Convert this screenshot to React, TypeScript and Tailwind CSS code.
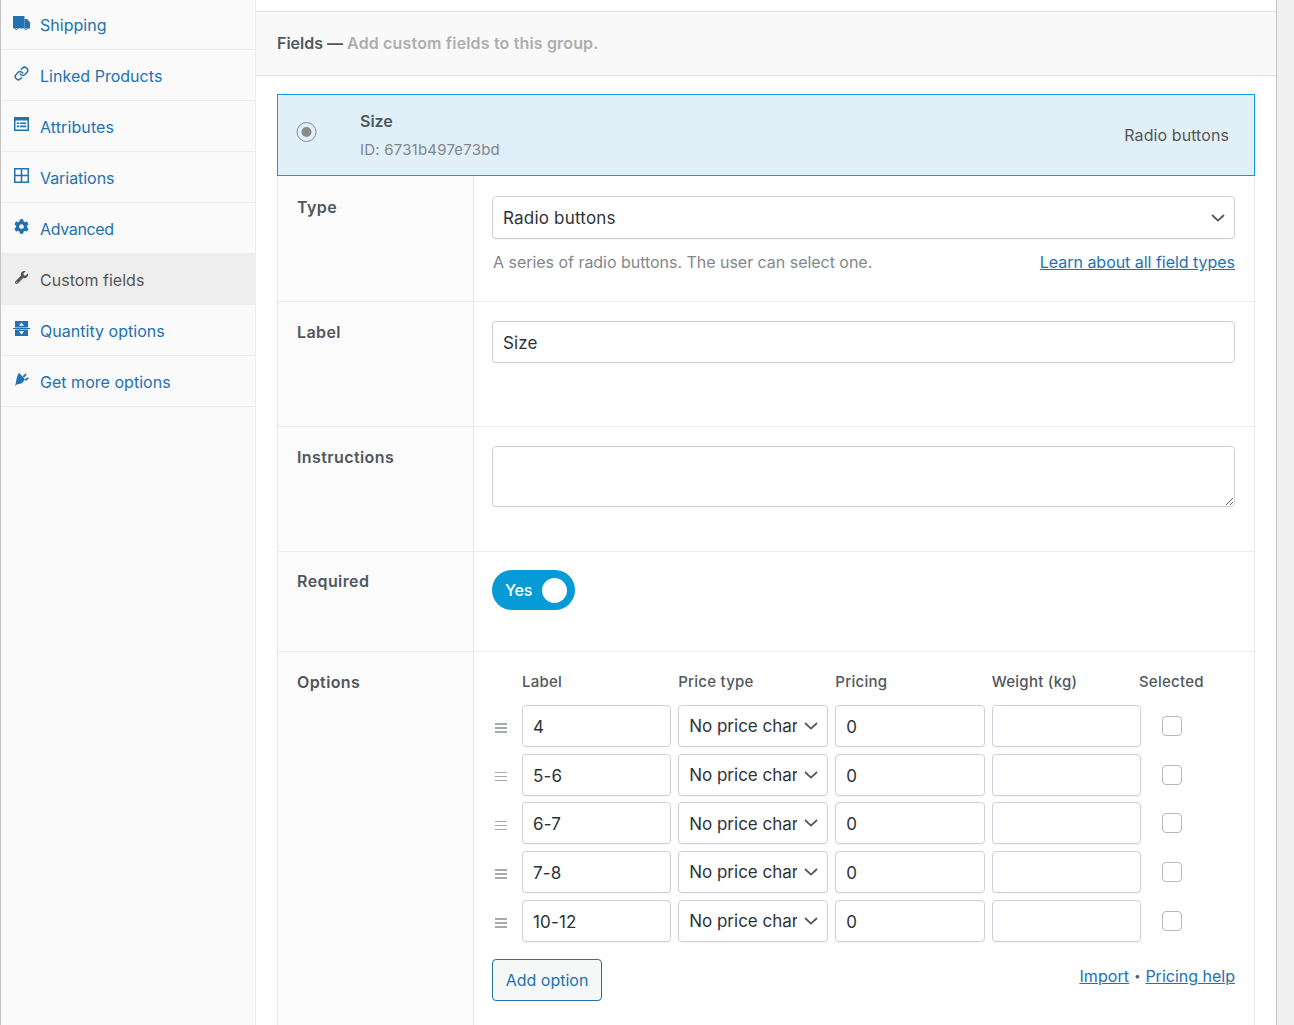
import * as React from "react";
import { FaCog, FaWrench } from "react-icons/fa";
import { Link as LinkIcon } from "lucide-react";

const TruckIcon = () => (
  <svg viewBox="0 0 17 14" className="w-[17px] h-[14px]" fill="currentColor">
    <path d="M0 0h11.5v12.4H0z" />
    <path d="M11.5 3h2.7L17 6.4v6H11.5z" />
    <circle cx="3.4" cy="12.6" r="1.4" />
    <circle cx="13" cy="12.6" r="1.4" />
    <circle cx="3.4" cy="12.6" r=".6" fill="#fafafa" />
    <circle cx="13" cy="12.6" r=".6" fill="#fafafa" />
  </svg>
);

const AttributesIcon = () => (
  <svg viewBox="0 0 15 14" className="w-[15px] h-[14px]" fill="currentColor">
    <path fillRule="evenodd" d="M0 0h15v14H0zM1.5 3.5v9h12v-9z" />
    <path d="M2.8 5.5h2.4v1.6H2.8zM2.8 8.6h2.4v1.6H2.8zM6 5.5h6.2v1.6H6zM6 8.6h6.2v1.6H6z" />
  </svg>
);

const VariationsIcon = () => (
  <svg viewBox="0 0 15 15" className="w-[15px] h-[15px]" fill="none" stroke="currentColor" strokeWidth="1.5">
    <path d="M.75.75h13.5v13.5H.75zM7.5.75v13.5M.75 7.5h13.5" />
  </svg>
);

const QuantityIcon = () => (
  <svg viewBox="0 0 17 15" className="w-[17px] h-[15px]" fill="currentColor">
    <path fillRule="evenodd" d="M2 0h13v6.6H2zM8.5 1.6 5.8 4.8h5.4z" />
    <path d="M0 7h17v1H0z" />
    <path fillRule="evenodd" d="M2 8.4h13V15H2zM5.8 10.2l2.7 3.2 2.7-3.2z" />
  </svg>
);

const PlugIcon = () => (
  <svg viewBox="0 0 14 13" className="w-[14px] h-[13px]" fill="currentColor">
    <path d="M3.2.6 4.6.2l5.4 6.2-3.2 3.8-5 1.4L0 13l.8-2.8L1.6 5.6z" />
    <path d="M7.4 3.2 10.6.4l1.2 1-2.8 3.4zM9.8 6.2l3.2-2 .9 1.2-3.2 2.6z" />
  </svg>
);

const Chevron = ({ className }: { className: string }) => (
  <svg viewBox="0 0 14 8" className={className} fill="none" stroke="currentColor" strokeWidth="1.8">
    <path d="M1 1l6 5.6L13 1" />
  </svg>
);

const sideItems = [
  { label: "Shipping", icon: <TruckIcon />, height: "h-[50px]", text: "tracking-[0.03px]" },
  { label: "Linked Products", icon: <LinkIcon className="w-[15px] h-[15px]" strokeWidth={2.4} />, height: "h-[51px]", text: "tracking-[0.03px]" },
  { label: "Attributes", icon: <AttributesIcon />, height: "h-[51px]", text: "tracking-[0.1px]" },
  { label: "Variations", icon: <VariationsIcon />, height: "h-[51px]", text: "tracking-[-0.05px]" },
  { label: "Advanced", icon: <FaCog className="w-[15px] h-[15px]" />, height: "h-[51px]", text: "tracking-[-0.35px]" },
  { label: "Custom fields", icon: <FaWrench className="w-[13px] h-[13px]" />, height: "h-[51px]", text: "tracking-[0.03px]", active: true },
  { label: "Quantity options", icon: <QuantityIcon />, height: "h-[51px]", text: "tracking-[0.03px]" },
  { label: "Get more options", icon: <PlugIcon />, height: "h-[51px]", text: "tracking-[0.03px]" },
];

const options = ["4", "5-6", "6-7", "7-8", "10-12"];

const inputClass =
  "block w-full bg-white border border-[#ccd0de] rounded-[4px] pl-[10px] pt-[2px] text-[17px] text-[#2c3338] shadow-[0_1px_1px_rgba(0,0,0,0.04)] outline-none";

const gridCols = "grid grid-cols-[22.8px_149px_150px_149.2px_149px_1fr] gap-x-[7.2px]";

function Row({
  label,
  className,
  labelPad,
  bodyPad,
  children,
}: {
  label: string;
  className: string;
  labelPad: string;
  bodyPad: string;
  children: React.ReactNode;
}) {
  return (
    <div className={`flex border-b border-[#eeeeee] ${className}`}>
      <div
        className={`w-[196px] shrink-0 bg-[#fbfbfb] border-r border-[#e5e5e5] pl-[19px] text-[16px] leading-[22px] font-semibold tracking-[0.4px] text-[#50575e] ${labelPad}`}
      >
        {label}
      </div>
      <div className={`flex-1 min-w-0 pl-[18px] pr-[19px] ${bodyPad}`}>{children}</div>
    </div>
  );
}

export default function App() {
  return (
    <div className="h-[1025px] overflow-hidden flex bg-[#f0f0f1] font-['Inter',sans-serif] text-[16px]">
      <div className="w-[256px] shrink-0 bg-[#fafafa] border-l border-l-[#c3c4c7] border-r border-r-[#eeeeee]">
        {sideItems.map((item) => (
          <div
            key={item.label}
            className={`flex items-center pl-[12px] ${item.height} ${
              item.active ? "bg-[#eeeeee] text-[#555555]" : "border-b border-[#eeeeee] text-[#2271b1]"
            }`}
          >
            <span className="w-[17px] flex justify-center -mt-[4px] mr-[10px]">{item.icon}</span>
            <span className={`leading-[22px] mt-[1px] ${item.text}`}>{item.label}</span>
          </div>
        ))}
      </div>

      <div className="w-[1021px] shrink-0 bg-white border-r border-[#c3c4c7] pt-[11px]">
        <div className="h-[65px] bg-[#f9f9f9] border-y border-[#e2e2e2] pl-[21px] pb-[2px] flex items-center font-semibold text-[#50575e]">
          Fields —&nbsp;<span className="text-[#aeaeae] tracking-[0.16px]">Add custom fields to this group.</span>
        </div>

        <div className="pl-[21px] pr-[21px] pt-[18px]">
          <div className="h-[82px] bg-[#e1eff8] border border-[#0f9dd7] flex items-center pr-[25px]">
            <div className="w-[20px] h-[20px] ml-[19px] mr-[43px] -mt-[7px] rounded-full border border-[#8a8a8a] flex items-center justify-center shrink-0 -translate-x-[0.5px]">
              <div className="w-[10px] h-[10px] rounded-full bg-[#8a8a8a]"></div>
            </div>
            <div className="flex-1 pt-[2px]">
              <div className="font-semibold text-[#50575e] leading-[22px] -mt-[1px]">Size</div>
              <div className="text-[15px] tracking-[0.2px] text-[#82878c] leading-[22px] mt-[7px]">ID: 6731b497e73bd</div>
            </div>
            <div className="text-[#555555] tracking-[0.08px]">Radio buttons</div>
          </div>

          <div className="border-l border-r border-[#e8e8e8]">
            <Row label="Type" className="h-[126px]" labelPad="pt-[20px]" bodyPad="pt-[20px]">
              <div className="relative">
                <select className={`${inputClass} h-[43px] appearance-none tracking-[0.2px]`} defaultValue="radio">
                  <option value="radio">Radio buttons</option>
                </select>
                <Chevron className="absolute right-[10px] top-[18px] w-[14px] h-[8px] text-[#50575e] pointer-events-none" />
              </div>
              <div className="flex justify-between mt-[12px] leading-[22px] pl-[1px]">
                <span className="text-[#82878c] tracking-[-0.03px]">A series of radio buttons. The user can select one.</span>
                <a href="#" className="text-[#2271b1] underline tracking-[-0.03px]">
                  Learn about all field types
                </a>
              </div>
            </Row>

            <Row label="Label" className="h-[125px]" labelPad="pt-[19px]" bodyPad="pt-[19px]">
              <input className={`${inputClass} h-[42px] tracking-[0.15px]`} defaultValue="Size" />
            </Row>

            <Row label="Instructions" className="h-[125px]" labelPad="pt-[19px]" bodyPad="pt-[19px]">
              <textarea className={`${inputClass} h-[61px]`} />
            </Row>

            <Row label="Required" className="h-[100px]" labelPad="pt-[18px]" bodyPad="pt-[18px]">
              <div className="w-[83px] h-[40px] rounded-full bg-[#069bd7] flex items-center pl-[13px] pr-[8px] justify-between">
                <span className="text-white font-medium tracking-[-0.2px]">Yes</span>
                <span className="w-[25px] h-[25px] rounded-full bg-white"></span>
              </div>
            </Row>

            <div className="flex h-[400px]">
              <div className="w-[196px] shrink-0 bg-[#fbfbfb] border-r border-[#e5e5e5] pl-[19px] pt-[19px] leading-[22px] font-semibold tracking-[0.4px] text-[#50575e]">
                Options
              </div>
              <div className="flex-1 min-w-0 pl-[18px] pr-[19px] pt-[19px]">
                <div className={`${gridCols} text-[15px] font-medium tracking-[0.25px] text-[#50575e] leading-[22px]`}>
                  <span></span>
                  <span>Label</span>
                  <span>Price type</span>
                  <span>Pricing</span>
                  <span>Weight (kg)</span>
                  <span className="-ml-[9px]">Selected</span>
                </div>
                <div className="mt-[12px] flex flex-col gap-[6.7px]">
                  {options.map((opt) => (
                    <div key={opt} className={`${gridCols} items-center h-[42px]`}>
                      <div className="w-[12px] ml-[3px] mt-[4px] flex flex-col gap-[2.5px]">
                        <span className="h-[1.5px] bg-[#a7aaad]"></span>
                        <span className="h-[1.5px] bg-[#a7aaad]"></span>
                        <span className="h-[1.5px] bg-[#a7aaad]"></span>
                      </div>
                      <input className={`${inputClass} h-[42px] tracking-[0.15px]`} defaultValue={opt} />
                      <div className="relative">
                        <select className={`${inputClass} h-[42px] appearance-none pr-[30px]`} defaultValue="none">
                          <option value="none">No price charge</option>
                        </select>
                        <Chevron className="absolute right-[10px] top-[17px] w-[14px] h-[8px] text-[#50575e] pointer-events-none" />
                      </div>
                      <input className={`${inputClass} h-[42px]`} defaultValue="0" />
                      <input className={`${inputClass} h-[42px]`} />
                      <div className="w-[20px] h-[20px] ml-[14px] rounded-[4px] bg-white border border-[#b4b9be]"></div>
                    </div>
                  ))}
                </div>
                <div className="flex justify-between mt-[17px]">
                  <button className="w-[110px] h-[42px] rounded-[4px] border border-[#2271b1] bg-[#f6f7f7] text-[#2271b1]">
                    Add option
                  </button>
                  <div className="text-[#50575e] leading-[22px] flex items-center h-[34px]">
                    <a href="#" className="text-[#2271b1] underline tracking-[0.1px]">
                      Import
                    </a>
                    <span className="text-[11px] mx-[5px]">•</span>
                    <a href="#" className="text-[#2271b1] underline">
                      Pricing help
                    </a>
                  </div>
                </div>
              </div>
            </div>
          </div>
        </div>
      </div>
    </div>
  );
}
